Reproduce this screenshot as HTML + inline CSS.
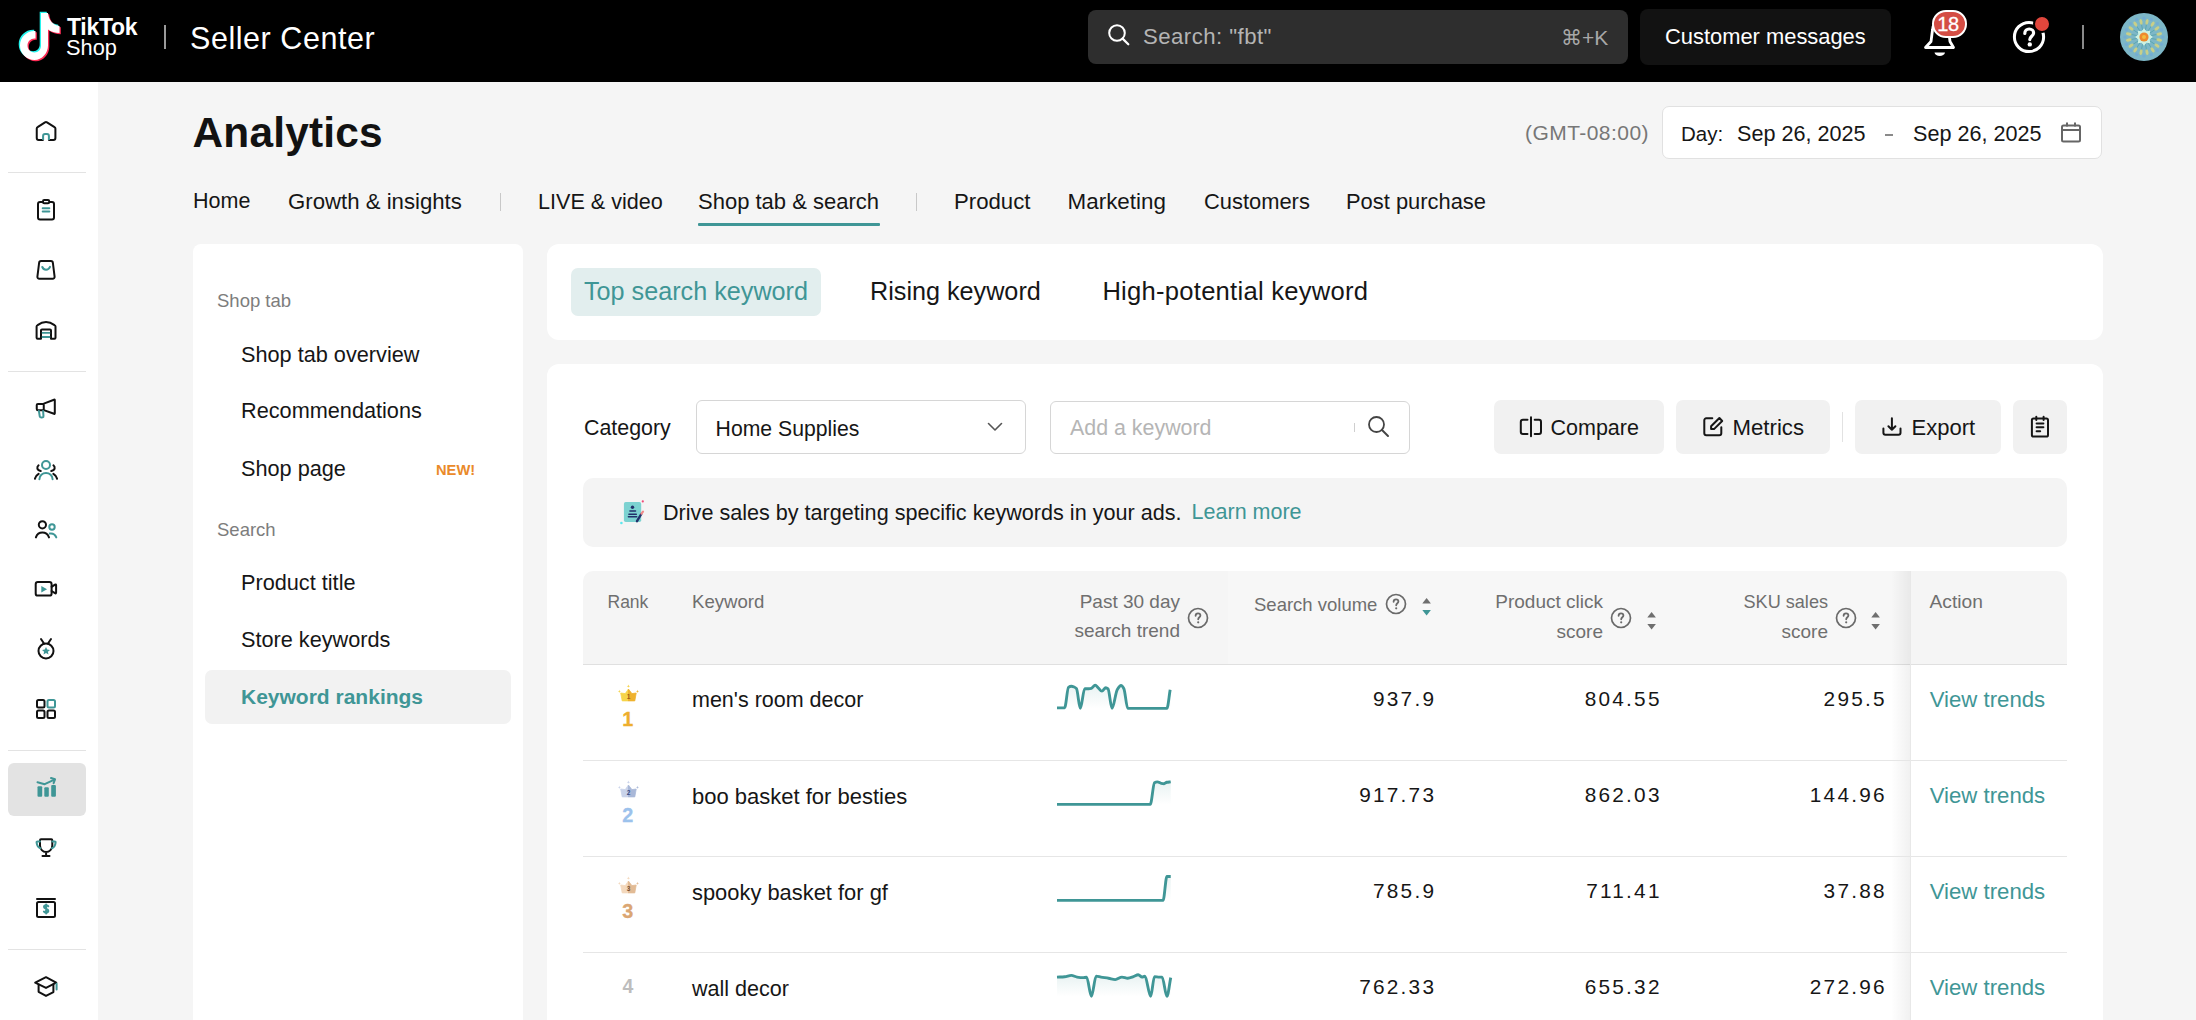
<!DOCTYPE html>
<html><head><meta charset="utf-8"><style>
html,body{margin:0;padding:0;width:2196px;height:1020px;overflow:hidden;background:#f5f5f5;}
body{position:relative;font-family:"Liberation Sans",sans-serif;}
.r{position:absolute;display:block;}
.t{position:absolute;white-space:nowrap;}
.med{-webkit-text-stroke:0.65px currentColor;}
.med2{-webkit-text-stroke:0.3px currentColor;}
</style></head><body>
<div class="r" style="left:0px;top:0px;width:2196px;height:1020px;background:#f5f5f5;border-radius:0;"></div>
<div class="r" style="left:0px;top:0px;width:2196px;height:82px;background:#000;border-radius:0;"></div>
<div class="r" style="left:0px;top:82px;width:98px;height:938px;background:#fff;border-radius:0;"></div>
<svg class="r" style="left:0px;top:0px;" width="70" height="70" viewBox="0 0 70 70"><path d="M41 13 H48 C48.5 20 53 25.5 59.5 26 V33 C55 33 51 31.5 48 29.5 V45.5 C48 53 42 60 34.5 60 C26.5 60 20 53.5 20 45.5 C20 37 27 30.5 35.5 31 V38.5 C31 38 27.5 41 27.5 45.5 C27.5 49.5 30.5 52.5 34.5 52.5 C38.5 52.5 41 49.5 41 45.5 Z" fill="#25f4ee" transform="translate(-1.3,-1.3)"/><path d="M41 13 H48 C48.5 20 53 25.5 59.5 26 V33 C55 33 51 31.5 48 29.5 V45.5 C48 53 42 60 34.5 60 C26.5 60 20 53.5 20 45.5 C20 37 27 30.5 35.5 31 V38.5 C31 38 27.5 41 27.5 45.5 C27.5 49.5 30.5 52.5 34.5 52.5 C38.5 52.5 41 49.5 41 45.5 Z" fill="#fe2c55" transform="translate(1.3,1.3)"/><path d="M41 13 H48 C48.5 20 53 25.5 59.5 26 V33 C55 33 51 31.5 48 29.5 V45.5 C48 53 42 60 34.5 60 C26.5 60 20 53.5 20 45.5 C20 37 27 30.5 35.5 31 V38.5 C31 38 27.5 41 27.5 45.5 C27.5 49.5 30.5 52.5 34.5 52.5 C38.5 52.5 41 49.5 41 45.5 Z" fill="#fff"/></svg>
<div class="t" style="left:67.00px;top:15.53px;font-size:23px;line-height:23px;color:#fff;font-weight:700;letter-spacing:-0.3px;">TikTok</div>
<div class="t" style="left:66.00px;top:37.05px;font-size:21.8px;line-height:21.8px;color:#fff;">Shop</div>
<div class="r" style="left:164px;top:25px;width:2px;height:24px;background:#9a9a9a;border-radius:0;"></div>
<div class="t" style="left:190.00px;top:23.18px;font-size:30.5px;line-height:30.5px;color:#fff;letter-spacing:0.55px;">Seller Center</div>
<div class="r" style="left:1088px;top:10px;width:540px;height:54px;background:#2e2e2e;border-radius:8px;"></div>
<svg class="r" style="left:1106px;top:22px;" width="26" height="26" viewBox="0 0 26 26"><circle cx="11" cy="11" r="7.8" fill="none" stroke="#fff" stroke-width="2"/><path d="M16.6 16.6 L22.3 22.3" stroke="#fff" stroke-width="2.2" stroke-linecap="round"/></svg>
<div class="t" class="med2" style="left:1143.00px;top:26.21px;font-size:22.2px;line-height:22.2px;color:#b4b4b4;letter-spacing:0.45px;">Search: "fbt"</div>
<div class="t" style="left:1561.00px;top:27.22px;font-size:21px;line-height:21px;color:#a8a8a8;">&#8984;+K</div>
<div class="r" style="left:1640px;top:9px;width:251px;height:56px;background:#121212;border-radius:8px;"></div>
<div class="t" class="med" style="left:1665.00px;top:26.46px;font-size:21.9px;line-height:21.9px;color:#fff;">Customer messages</div>
<svg class="r" style="left:1920px;top:14px;" width="40" height="48" viewBox="0 0 40 48"><path d="M5.5 33.5 L11 27.5 L12.5 16 C13 10 16.5 7 20.5 7 C24.5 7 28 10 28.5 16 L30 27.5 L33.5 33.5 Z" fill="none" stroke="#fff" stroke-width="2.8" stroke-linejoin="round"/><path d="M14.5 38.5 C15 43 24.5 43 25 38.5 Z" fill="#fff"/></svg>
<div class="r" style="left:1932px;top:10px;width:35px;height:28px;background:#d44d44;border-radius:14px;border:2px solid #fff;box-sizing:border-box;"></div>
<div class="t" style="left:1937.30px;top:13.67px;font-size:20px;line-height:20px;color:#fff;letter-spacing:-0.4px;-webkit-text-stroke:0.3px #fff;">18</div>
<svg class="r" style="left:2010px;top:18px;" width="40" height="40" viewBox="0 0 40 40"><circle cx="19" cy="19" r="14.6" fill="none" stroke="#fff" stroke-width="3"/><path d="M14.8 15.4 C14.8 12.6 16.8 11 19.2 11 C21.8 11 23.6 12.6 23.6 15 C23.6 18.2 19.8 18.4 19.8 21.6" fill="none" stroke="#fff" stroke-width="3.2" stroke-linecap="round"/><circle cx="19.8" cy="26.4" r="2.2" fill="#fff"/></svg>
<div class="r" style="left:2033px;top:15px;width:18px;height:18px;border-radius:50%;background:#e0463c;border:2px solid #000;box-sizing:border-box;"></div>
<div class="r" style="left:2082px;top:25px;width:2px;height:24px;background:#8a8a8a;border-radius:0;"></div>
<svg class="r" style="left:2120px;top:13px;" width="48" height="48" viewBox="0 0 48 48"><circle cx="24" cy="24" r="24" fill="#7db7c7"/><line x1="30.9" y1="25.4" x2="37.7" y2="26.7" stroke="#4e9fa6" stroke-width="1" stroke-opacity="0.7"/><line x1="29.8" y1="27.9" x2="35.6" y2="31.8" stroke="#4e9fa6" stroke-width="1" stroke-opacity="0.7"/><line x1="27.9" y1="29.8" x2="31.8" y2="35.6" stroke="#4e9fa6" stroke-width="1" stroke-opacity="0.7"/><line x1="25.4" y1="30.9" x2="26.7" y2="37.7" stroke="#4e9fa6" stroke-width="1" stroke-opacity="0.7"/><line x1="22.6" y1="30.9" x2="21.3" y2="37.7" stroke="#4e9fa6" stroke-width="1" stroke-opacity="0.7"/><line x1="20.1" y1="29.8" x2="16.2" y2="35.6" stroke="#4e9fa6" stroke-width="1" stroke-opacity="0.7"/><line x1="18.2" y1="27.9" x2="12.4" y2="31.8" stroke="#4e9fa6" stroke-width="1" stroke-opacity="0.7"/><line x1="17.1" y1="25.4" x2="10.3" y2="26.7" stroke="#4e9fa6" stroke-width="1" stroke-opacity="0.7"/><line x1="17.1" y1="22.6" x2="10.3" y2="21.3" stroke="#4e9fa6" stroke-width="1" stroke-opacity="0.7"/><line x1="18.2" y1="20.1" x2="12.4" y2="16.2" stroke="#4e9fa6" stroke-width="1" stroke-opacity="0.7"/><line x1="20.1" y1="18.2" x2="16.2" y2="12.4" stroke="#4e9fa6" stroke-width="1" stroke-opacity="0.7"/><line x1="22.6" y1="17.1" x2="21.3" y2="10.3" stroke="#4e9fa6" stroke-width="1" stroke-opacity="0.7"/><line x1="25.4" y1="17.1" x2="26.7" y2="10.3" stroke="#4e9fa6" stroke-width="1" stroke-opacity="0.7"/><line x1="27.9" y1="18.2" x2="31.8" y2="12.4" stroke="#4e9fa6" stroke-width="1" stroke-opacity="0.7"/><line x1="29.8" y1="20.1" x2="35.6" y2="16.2" stroke="#4e9fa6" stroke-width="1" stroke-opacity="0.7"/><line x1="30.9" y1="22.6" x2="37.7" y2="21.3" stroke="#4e9fa6" stroke-width="1" stroke-opacity="0.7"/><ellipse cx="39.2" cy="27.0" rx="2.9" ry="1.5" fill="#d6d47e" fill-opacity="0.85" transform="rotate(11.2 39.2 27.0)"/><circle cx="41.6" cy="31.3" r="1.6" fill="#71a8d8" fill-opacity="0.7"/><ellipse cx="36.9" cy="32.6" rx="2.9" ry="1.5" fill="#d6d47e" fill-opacity="0.85" transform="rotate(33.8 36.9 32.6)"/><circle cx="37.4" cy="37.4" r="1.6" fill="#71a8d8" fill-opacity="0.7"/><ellipse cx="32.6" cy="36.9" rx="2.9" ry="1.5" fill="#d6d47e" fill-opacity="0.85" transform="rotate(56.2 32.6 36.9)"/><circle cx="31.3" cy="41.6" r="1.6" fill="#71a8d8" fill-opacity="0.7"/><ellipse cx="27.0" cy="39.2" rx="2.9" ry="1.5" fill="#d6d47e" fill-opacity="0.85" transform="rotate(78.8 27.0 39.2)"/><circle cx="24.0" cy="43.0" r="1.6" fill="#71a8d8" fill-opacity="0.7"/><ellipse cx="21.0" cy="39.2" rx="2.9" ry="1.5" fill="#d6d47e" fill-opacity="0.85" transform="rotate(101.2 21.0 39.2)"/><circle cx="16.7" cy="41.6" r="1.6" fill="#71a8d8" fill-opacity="0.7"/><ellipse cx="15.4" cy="36.9" rx="2.9" ry="1.5" fill="#d6d47e" fill-opacity="0.85" transform="rotate(123.7 15.4 36.9)"/><circle cx="10.6" cy="37.4" r="1.6" fill="#71a8d8" fill-opacity="0.7"/><ellipse cx="11.1" cy="32.6" rx="2.9" ry="1.5" fill="#d6d47e" fill-opacity="0.85" transform="rotate(146.3 11.1 32.6)"/><circle cx="6.4" cy="31.3" r="1.6" fill="#71a8d8" fill-opacity="0.7"/><ellipse cx="8.8" cy="27.0" rx="2.9" ry="1.5" fill="#d6d47e" fill-opacity="0.85" transform="rotate(168.7 8.8 27.0)"/><circle cx="5.0" cy="24.0" r="1.6" fill="#71a8d8" fill-opacity="0.7"/><ellipse cx="8.8" cy="21.0" rx="2.9" ry="1.5" fill="#d6d47e" fill-opacity="0.85" transform="rotate(191.3 8.8 21.0)"/><circle cx="6.4" cy="16.7" r="1.6" fill="#71a8d8" fill-opacity="0.7"/><ellipse cx="11.1" cy="15.4" rx="2.9" ry="1.5" fill="#d6d47e" fill-opacity="0.85" transform="rotate(213.7 11.1 15.4)"/><circle cx="10.6" cy="10.6" r="1.6" fill="#71a8d8" fill-opacity="0.7"/><ellipse cx="15.4" cy="11.1" rx="2.9" ry="1.5" fill="#d6d47e" fill-opacity="0.85" transform="rotate(236.3 15.4 11.1)"/><circle cx="16.7" cy="6.4" r="1.6" fill="#71a8d8" fill-opacity="0.7"/><ellipse cx="21.0" cy="8.8" rx="2.9" ry="1.5" fill="#d6d47e" fill-opacity="0.85" transform="rotate(258.8 21.0 8.8)"/><circle cx="24.0" cy="5.0" r="1.6" fill="#71a8d8" fill-opacity="0.7"/><ellipse cx="27.0" cy="8.8" rx="2.9" ry="1.5" fill="#d6d47e" fill-opacity="0.85" transform="rotate(281.2 27.0 8.8)"/><circle cx="31.3" cy="6.4" r="1.6" fill="#71a8d8" fill-opacity="0.7"/><ellipse cx="32.6" cy="11.1" rx="2.9" ry="1.5" fill="#d6d47e" fill-opacity="0.85" transform="rotate(303.8 32.6 11.1)"/><circle cx="37.4" cy="10.6" r="1.6" fill="#71a8d8" fill-opacity="0.7"/><ellipse cx="36.9" cy="15.4" rx="2.9" ry="1.5" fill="#d6d47e" fill-opacity="0.85" transform="rotate(326.2 36.9 15.4)"/><circle cx="41.6" cy="16.7" r="1.6" fill="#71a8d8" fill-opacity="0.7"/><ellipse cx="39.2" cy="21.0" rx="2.9" ry="1.5" fill="#d6d47e" fill-opacity="0.85" transform="rotate(348.8 39.2 21.0)"/><circle cx="43.0" cy="24.0" r="1.6" fill="#71a8d8" fill-opacity="0.7"/><polygon points="32.8,24.0 29.7,26.4 30.2,30.2 26.4,29.7 24.0,32.8 21.6,29.7 17.8,30.2 18.3,26.4 15.2,24.0 18.3,21.6 17.8,17.8 21.6,18.3 24.0,15.2 26.4,18.3 30.2,17.8 29.7,21.6 " fill="#cdf2e2"/><circle cx="24" cy="24" r="4.6" fill="#ee8a2e"/><circle cx="24" cy="24" r="2" fill="#f3bd3a"/></svg>
<div class="r" style="left:8px;top:172px;width:78px;height:1px;background:#e3e3e3;border-radius:0;"></div>
<div class="r" style="left:8px;top:371px;width:78px;height:1px;background:#e3e3e3;border-radius:0;"></div>
<div class="r" style="left:8px;top:750px;width:78px;height:1px;background:#e3e3e3;border-radius:0;"></div>
<div class="r" style="left:8px;top:949px;width:78px;height:1px;background:#e3e3e3;border-radius:0;"></div>
<div class="r" style="left:8px;top:763px;width:78px;height:53px;background:#e3e3e3;border-radius:6px;"></div>
<svg class="r" style="left:34px;top:118px;" width="24" height="24" viewBox="0 0 24 24"><path d="M8.9 22.1 H4.7 C3.6 22.1 2.75 21.2 2.75 20.1 V10.5 C2.75 9.9 3.1 9.4 3.6 9.1 L11 4.3 C11.6 3.9 12.4 3.9 13 4.3 L20.5 9.1 C21 9.4 21.4 9.9 21.4 10.5 V20.1 C21.4 21.2 20.5 22.1 19.4 22.1 H15" fill="none" stroke="#111" stroke-width="2" stroke-linecap="round" stroke-linejoin="round"/><path d="M9.1 22.1 V18.1 C9.1 16.9 9.8 16.1 11 16.1 H13 C14.2 16.1 14.9 16.9 14.9 18.1 V22.1" fill="none" stroke="#3f9696" stroke-width="2"/></svg>
<svg class="r" style="left:34px;top:197px;" width="24" height="24" viewBox="0 0 24 24"><rect x="4" y="5.1" width="16" height="17.5" rx="2" fill="none" stroke="#111" stroke-width="2" stroke-linecap="round" stroke-linejoin="round"/><rect x="9" y="3.1" width="6.2" height="3.2" rx="1.2" fill="#fff" stroke="#111" stroke-width="2"/><path d="M8.7 11.3 H15.3 M8.7 14.6 H15.3" fill="none" stroke="#3f9696" stroke-width="2" stroke-linecap="round" stroke-linejoin="round"/></svg>
<svg class="r" style="left:34px;top:257px;" width="24" height="24" viewBox="0 0 24 24"><path d="M7.1 4.1 H16.9 C18 4.1 18.8 4.9 18.9 6 L20.6 19.7 C20.7 20.9 19.9 21.8 18.7 21.8 H5.3 C4.1 21.8 3.3 20.9 3.4 19.7 L5.1 6 C5.2 4.9 6 4.1 7.1 4.1 Z" fill="none" stroke="#111" stroke-width="2" stroke-linecap="round" stroke-linejoin="round"/><path d="M8.3 10 C9.8 13.6 14.3 13.6 16 9.8" fill="none" stroke="#3f9696" stroke-width="2" stroke-linecap="round" stroke-linejoin="round"/></svg>
<svg class="r" style="left:34px;top:318px;" width="24" height="24" viewBox="0 0 24 24"><path d="M7 20.8 H3.6 C3 20.8 2.6 20.4 2.6 19.8 V8.6 C2.6 7.8 3 7.3 3.6 7.1 Q12 0.9 20.5 7.1 C21.1 7.3 21.5 7.8 21.5 8.6 V19.8 C21.5 20.4 21.1 20.8 20.5 20.8 H17 V12.5 C17 11.9 16.6 11.4 16 11.4 H8 C7.4 11.4 7 11.9 7 12.5 Z" fill="none" stroke="#111" stroke-width="2" stroke-linecap="round" stroke-linejoin="round"/><path d="M7.8 14.8 H16.2 M7.8 19 H16.2" fill="none" stroke="#3f9696" stroke-width="1.8"/></svg>
<svg class="r" style="left:34px;top:395px;" width="24" height="24" viewBox="0 0 24 24"><rect x="2.75" y="8.9" width="7" height="6.4" rx="1.2" fill="none" stroke="#111" stroke-width="2" stroke-linecap="round" stroke-linejoin="round"/><path d="M9.8 8.6 L20 4.7 C20.5 4.5 20.8 4.7 20.8 5.2 V18.3 C20.8 18.8 20.5 19 20 18.8 L9.8 15.1" fill="none" stroke="#111" stroke-width="2" stroke-linecap="round" stroke-linejoin="round"/><path d="M4.9 15.9 L5.8 21.6 C6.1 22.9 9.7 22.7 9.5 21.4 L9.1 15.9" fill="none" stroke="#3f9696" stroke-width="2" stroke-linecap="round" stroke-linejoin="round"/></svg>
<svg class="r" style="left:34px;top:458px;" width="24" height="24" viewBox="0 0 24 24"><circle cx="12" cy="7" r="4" fill="none" stroke="#3f9696" stroke-width="2" stroke-linecap="round" stroke-linejoin="round"/><path d="M5.4 21.2 C5.4 17.5 8.4 15 12 15 C15.6 15 18.6 17.5 18.6 21.2" fill="none" stroke="#3f9696" stroke-width="2" stroke-linecap="round" stroke-linejoin="round"/><path d="M4.6 7.3 C2.6 9 2.6 12.2 6.8 13 M19.4 7.3 C21.4 9 21.4 12.2 17.2 13" fill="none" stroke="#111" stroke-width="2" stroke-linecap="round" stroke-linejoin="round"/><path d="M4.6 15.8 C2.6 17 1.2 18.8 0.9 20.8 M19.4 15.8 C21.4 17 22.8 18.8 23.1 20.8" fill="none" stroke="#111" stroke-width="2" stroke-linecap="round" stroke-linejoin="round"/></svg>
<svg class="r" style="left:34px;top:517px;" width="24" height="24" viewBox="0 0 24 24"><circle cx="8.4" cy="7.8" r="3.6" fill="none" stroke="#111" stroke-width="2" stroke-linecap="round" stroke-linejoin="round"/><path d="M1.9 20.4 C3 17.3 5.5 15.6 8.4 15.6 C11.3 15.6 13.8 17.3 15 20.4" fill="none" stroke="#111" stroke-width="2" stroke-linecap="round" stroke-linejoin="round"/><circle cx="18" cy="10" r="2.7" fill="none" stroke="#3f9696" stroke-width="2" stroke-linecap="round" stroke-linejoin="round"/><path d="M15.8 16.5 C18.5 16.1 21.2 17.5 22.3 20.4" fill="none" stroke="#3f9696" stroke-width="2" stroke-linecap="round" stroke-linejoin="round"/></svg>
<svg class="r" style="left:34px;top:577px;" width="24" height="24" viewBox="0 0 24 24"><rect x="1.7" y="5.1" width="15.9" height="13.5" rx="2.2" fill="none" stroke="#111" stroke-width="2" stroke-linecap="round" stroke-linejoin="round"/><path d="M17.6 9.8 L21 7.6 C21.6 7.2 22.1 7.5 22.1 8.2 V15.6 C22.1 16.3 21.6 16.6 21 16.2 L17.6 14" fill="none" stroke="#111" stroke-width="2" stroke-linecap="round" stroke-linejoin="round"/><path d="M7.3 8.9 V15.5 L13.1 12.2 Z" fill="#3f9696"/></svg>
<svg class="r" style="left:34px;top:637px;" width="24" height="24" viewBox="0 0 24 24"><circle cx="12" cy="14" r="7.5" fill="none" stroke="#111" stroke-width="2" stroke-linecap="round" stroke-linejoin="round"/><path d="M7 2 L10 6.5 M17 2 L14 6.5" fill="none" stroke="#111" stroke-width="2" stroke-linecap="round" stroke-linejoin="round"/><path d="M12 10 L13.2 12.6 L16 12.9 L13.9 14.7 L14.5 17.5 L12 16 L9.5 17.5 L10.1 14.7 L8 12.9 L10.8 12.6 Z" fill="#3f9696"/></svg>
<svg class="r" style="left:34px;top:697px;" width="24" height="24" viewBox="0 0 24 24"><rect x="3" y="3" width="7.5" height="7.5" rx="1.5" fill="none" stroke="#111" stroke-width="2" stroke-linecap="round" stroke-linejoin="round"/><rect x="13.5" y="3" width="7.5" height="7.5" rx="1.5" fill="none" stroke="#3f9696" stroke-width="2" stroke-linecap="round" stroke-linejoin="round"/><rect x="3" y="13.5" width="7.5" height="7.5" rx="1.5" fill="none" stroke="#111" stroke-width="2" stroke-linecap="round" stroke-linejoin="round"/><rect x="13.5" y="13.5" width="7.5" height="7.5" rx="1.5" fill="none" stroke="#111" stroke-width="2" stroke-linecap="round" stroke-linejoin="round"/></svg>
<svg class="r" style="left:34px;top:776px;" width="24" height="24" viewBox="0 0 24 24"><rect x="3.5" y="10.2" width="4.7" height="10.6" rx="1" fill="#3f9696"/><rect x="10.3" y="11.3" width="4.5" height="9.5" rx="1" fill="#3f9696"/><rect x="17.2" y="9.1" width="4.7" height="11.7" rx="1" fill="#3f9696"/><path d="M3.5 6.3 L10.7 8.2 L20.4 3.6" fill="none" stroke="#3f9696" stroke-width="2" stroke-linecap="round" stroke-linejoin="round"/><path d="M17 2 L21 3.3 L19.6 7.2" fill="none" stroke="#3f9696" stroke-width="2" stroke-linecap="round" stroke-linejoin="round"/></svg>
<svg class="r" style="left:34px;top:835px;" width="24" height="24" viewBox="0 0 24 24"><path d="M6 5.2 C6 4.6 6.4 4.2 7 4.2 H17.3 C17.9 4.2 18.3 4.6 18.3 5.2 V10.5 C18.3 14.2 15.5 17 12.1 17 C8.7 17 6 14.2 6 10.5 Z M12.1 17 V21.1 M8.5 21.1 H15.5" fill="none" stroke="#111" stroke-width="2" stroke-linecap="round" stroke-linejoin="round"/><path d="M6 6.4 H3.6 C2.9 6.4 2.5 6.9 2.6 7.6 C3 10.5 4.1 12.5 6.4 13.2 M18.3 6.4 H20.6 C21.3 6.4 21.7 6.9 21.6 7.6 C21.2 10.5 20.1 12.5 17.9 13.2" fill="none" stroke="#3f9696" stroke-width="2" stroke-linecap="round" stroke-linejoin="round"/></svg>
<svg class="r" style="left:34px;top:896px;" width="24" height="24" viewBox="0 0 24 24"><path d="M3 2.9 H21" fill="none" stroke="#111" stroke-width="2" stroke-linecap="round" stroke-linejoin="round"/><rect x="3" y="6" width="18" height="15" rx="1.5" fill="none" stroke="#111" stroke-width="2" stroke-linecap="round" stroke-linejoin="round"/><path d="M14.3 10.3 C13.9 9.6 13.1 9.3 12.2 9.3 C10.9 9.3 10 10 10 11 C10 13.2 14.3 12.4 14.3 14.8 C14.3 15.8 13.4 16.6 12.1 16.6 C11.2 16.6 10.3 16.2 9.9 15.5 M12.1 8.4 V17.6" fill="none" stroke="#3f9696" stroke-width="2" stroke-linecap="round" stroke-linejoin="round"/></svg>
<svg class="r" style="left:34px;top:974px;" width="24" height="24" viewBox="0 0 24 24"><path d="M1.2 8.6 L12 3.2 L22.2 8.6 L12 13.9 Z" fill="none" stroke="#111" stroke-width="2" stroke-linecap="round" stroke-linejoin="round"/><path d="M4.6 10.6 V17.8 L12 21.9 L19.4 18.1 V10.4" fill="none" stroke="#111" stroke-width="2" stroke-linecap="round" stroke-linejoin="round"/><path d="M22.6 9.8 V15.4" fill="none" stroke="#3f9696" stroke-width="2" stroke-linecap="round" stroke-linejoin="round"/></svg>
<div class="t" style="left:192.50px;top:112.11px;font-size:42.4px;line-height:42.4px;color:#121212;font-weight:700;letter-spacing:0.2px;">Analytics</div>
<div class="t" style="left:1525.00px;top:122.02px;font-size:21px;line-height:21px;color:#777;letter-spacing:0.45px;">(GMT-08:00)</div>
<div class="r" style="left:1662px;top:106px;width:440px;height:53px;background:#fff;border-radius:7px;border:1px solid #e1e1e1;box-sizing:border-box;"></div>
<div class="t" style="left:1681.00px;top:123.65px;font-size:20.5px;line-height:20.5px;color:#161616;">Day:</div>
<div class="t" style="left:1737.00px;top:122.72px;font-size:21.6px;line-height:21.6px;color:#161616;">Sep 26, 2025</div>
<div class="r" style="left:1885px;top:134px;width:8px;height:2px;background:#8a8a8a;border-radius:0;"></div>
<div class="t" style="left:1913.00px;top:122.72px;font-size:21.6px;line-height:21.6px;color:#161616;">Sep 26, 2025</div>
<svg class="r" style="left:2059px;top:120px;" width="24" height="24" viewBox="0 0 24 24"><rect x="3" y="5.5" width="18" height="16" rx="1.5" fill="none" stroke="#666" stroke-width="2"/><path d="M3 10 H21 M8 2.5 V6.5 M16 2.5 V6.5" fill="none" stroke="#666" stroke-width="2"/></svg>
<div class="t" class="med" style="left:193.00px;top:191.30px;font-size:21.5px;line-height:21.5px;color:#161616;">Home</div>
<div class="t" class="med" style="left:288.00px;top:190.71px;font-size:22.2px;line-height:22.2px;color:#161616;">Growth &amp; insights</div>
<div class="t" class="med" style="left:538.00px;top:191.22px;font-size:21.6px;line-height:21.6px;color:#161616;">LIVE &amp; video</div>
<div class="t" class="med" style="left:698.00px;top:190.88px;font-size:22.0px;line-height:22.0px;color:#161616;">Shop tab &amp; search</div>
<div class="t" class="med" style="left:954.00px;top:190.71px;font-size:22.2px;line-height:22.2px;color:#161616;">Product</div>
<div class="t" class="med" style="left:1067.60px;top:190.54px;font-size:22.4px;line-height:22.4px;color:#161616;">Marketing</div>
<div class="t" class="med" style="left:1204.00px;top:190.96px;font-size:21.9px;line-height:21.9px;color:#161616;">Customers</div>
<div class="t" class="med" style="left:1346.00px;top:190.96px;font-size:21.9px;line-height:21.9px;color:#161616;">Post purchase</div>
<div class="r" style="left:500px;top:193px;width:1px;height:18px;background:#c8c8c8;border-radius:0;"></div>
<div class="r" style="left:916px;top:193px;width:1px;height:18px;background:#c8c8c8;border-radius:0;"></div>
<div class="r" style="left:698px;top:223px;width:182px;height:3px;background:#3f9696;border-radius:1px;"></div>
<div class="r" style="left:193px;top:244px;width:330px;height:796px;background:#fff;border-radius:8px;"></div>
<div class="t" style="left:217.00px;top:292.34px;font-size:18.5px;line-height:18.5px;color:#7d7d7d;">Shop tab</div>
<div class="t" style="left:241.00px;top:343.63px;font-size:21.7px;line-height:21.7px;color:#161616;">Shop tab overview</div>
<div class="t" style="left:241.00px;top:400.43px;font-size:21.7px;line-height:21.7px;color:#161616;">Recommendations</div>
<div class="t" style="left:241.00px;top:458.03px;font-size:21.7px;line-height:21.7px;color:#161616;">Shop page</div>
<div class="t" style="left:436.00px;top:462.56px;font-size:14.7px;line-height:14.7px;color:#ea8a2a;font-weight:700;">NEW!</div>
<div class="t" style="left:217.00px;top:520.64px;font-size:18.5px;line-height:18.5px;color:#7d7d7d;">Search</div>
<div class="t" style="left:241.00px;top:571.83px;font-size:21.7px;line-height:21.7px;color:#161616;">Product title</div>
<div class="t" style="left:241.00px;top:628.63px;font-size:21.7px;line-height:21.7px;color:#161616;">Store keywords</div>
<div class="r" style="left:205px;top:670px;width:306px;height:54px;background:#f2f2f2;border-radius:7px;"></div>
<div class="t" style="left:241.00px;top:686.22px;font-size:21px;line-height:21px;color:#3f9696;font-weight:700;">Keyword rankings</div>
<div class="r" style="left:547px;top:244px;width:1556px;height:96px;background:#fff;border-radius:12px;"></div>
<div class="r" style="left:571px;top:268px;width:250px;height:48px;background:#e2eeee;border-radius:7px;"></div>
<div class="t" class="med" style="left:584.00px;top:279.27px;font-size:25.2px;line-height:25.2px;color:#3f9696;">Top search keyword</div>
<div class="t" class="med" style="left:870.00px;top:279.27px;font-size:25.2px;line-height:25.2px;color:#161616;">Rising keyword</div>
<div class="t" class="med" style="left:1102.40px;top:278.93px;font-size:25.6px;line-height:25.6px;color:#161616;letter-spacing:0.25px;">High-potential keyword</div>
<div class="r" style="left:547px;top:364px;width:1556px;height:676px;background:#fff;border-radius:12px;"></div>
<div class="t" style="left:584.00px;top:417.68px;font-size:21.4px;line-height:21.4px;color:#161616;">Category</div>
<div class="r" style="left:696px;top:400px;width:330px;height:54px;background:#fff;border-radius:6px;border:1px solid #d6d6d6;box-sizing:border-box;"></div>
<div class="t" style="left:715.60px;top:417.55px;font-size:21.2px;line-height:21.2px;color:#161616;">Home Supplies</div>
<svg class="r" style="left:986px;top:419px;" width="18" height="16" viewBox="0 0 18 16"><path d="M2.5 4.5 L9 11 L15.5 4.5" fill="none" stroke="#555" stroke-width="1.6" stroke-linecap="round" stroke-linejoin="round"/></svg>
<div class="r" style="left:1050px;top:401px;width:360px;height:53px;background:#fff;border-radius:6px;border:1px solid #d6d6d6;box-sizing:border-box;"></div>
<div class="t" style="left:1070.00px;top:418.38px;font-size:21.4px;line-height:21.4px;color:#b5b5b5;">Add a keyword</div>
<div class="r" style="left:1354px;top:423px;width:1px;height:9px;background:#cfcfcf;border-radius:0;"></div>
<svg class="r" style="left:1366px;top:414px;" width="26" height="26" viewBox="0 0 26 26"><circle cx="10.5" cy="10.5" r="7.5" fill="none" stroke="#444" stroke-width="1.8"/><path d="M16 16 L22 22" stroke="#444" stroke-width="2" stroke-linecap="round"/></svg>
<div class="r" style="left:1494px;top:400px;width:170px;height:54px;background:#f1f1f1;border-radius:7px;"></div>
<svg class="r" style="left:1518px;top:415px;" width="26" height="24" viewBox="0 0 26 24"><path d="M9.5 4.8 H5 C3.7 4.8 2.8 5.7 2.8 7 V16.8 C2.8 18.1 3.7 19 5 19 H9.5 M16.7 4.8 H21 C22.2 4.8 23 5.7 23 7 V16.8 C23 18.1 22.2 19 21 19 H16.7" fill="none" stroke="#161616" stroke-width="2" stroke-linecap="round" stroke-linejoin="round"/><path d="M13 2.3 V21.3" fill="none" stroke="#161616" stroke-width="2" stroke-linecap="round" stroke-linejoin="round"/></svg>
<div class="t" class="med" style="left:1550.50px;top:417.80px;font-size:21.5px;line-height:21.5px;color:#161616;">Compare</div>
<div class="r" style="left:1676px;top:400px;width:154px;height:54px;background:#f1f1f1;border-radius:7px;"></div>
<svg class="r" style="left:1701px;top:414px;" width="24" height="24" viewBox="0 0 24 24"><path d="M11.3 4.3 H5.3 C4.1 4.3 3.3 5.1 3.3 6.3 V19.3 C3.3 20.5 4.1 21.3 5.3 21.3 H18.3 C19.5 21.3 20.3 20.5 20.3 19.3 V13.3" fill="none" stroke="#161616" stroke-width="2" stroke-linecap="round" stroke-linejoin="round"/><path d="M10.1 15.1 V12.3 L18.4 4 L21.2 7 L13 15.1 Z" fill="none" stroke="#161616" stroke-width="2" stroke-linecap="round" stroke-linejoin="round"/></svg>
<div class="t" class="med" style="left:1732.50px;top:417.21px;font-size:22.2px;line-height:22.2px;color:#161616;">Metrics</div>
<div class="r" style="left:1842px;top:412px;width:1px;height:30px;background:#e2e2e2;border-radius:0;"></div>
<div class="r" style="left:1855px;top:400px;width:146px;height:54px;background:#f1f1f1;border-radius:7px;"></div>
<svg class="r" style="left:1880px;top:415px;" width="24" height="24" viewBox="0 0 24 24"><path d="M11.9 3.3 V14.8 M8.4 11.3 L11.9 14.8 L15.4 11.3" fill="none" stroke="#161616" stroke-width="2" stroke-linecap="round" stroke-linejoin="round"/><path d="M3.4 13.4 V17.8 C3.4 19 4.2 19.8 5.4 19.8 H18.5 C19.7 19.8 20.5 19 20.5 17.8 V13.4" fill="none" stroke="#161616" stroke-width="2" stroke-linecap="round" stroke-linejoin="round"/></svg>
<div class="t" class="med" style="left:1911.60px;top:417.38px;font-size:22px;line-height:22px;color:#161616;">Export</div>
<div class="r" style="left:2013px;top:400px;width:54px;height:54px;background:#f1f1f1;border-radius:7px;"></div>
<svg class="r" style="left:2028px;top:414px;" width="24" height="26" viewBox="0 0 24 26"><rect x="3.9" y="4.4" width="16.1" height="18.2" rx="1.6" fill="none" stroke="#161616" stroke-width="2" stroke-linecap="round" stroke-linejoin="round"/><path d="M8.3 2.8 V6 M15.6 2.8 V6 M8.6 9.5 H15.4 M8.6 13.3 H15.4 M8.6 17.3 H12.2" fill="none" stroke="#161616" stroke-width="2" stroke-linecap="round" stroke-linejoin="round"/></svg>
<div class="r" style="left:583px;top:478px;width:1484px;height:69px;background:#f4f4f4;border-radius:10px;"></div>
<svg class="r" style="left:617px;top:498px;" width="30" height="30" viewBox="0 0 30 30"><rect x="6.9" y="4.1" width="17.3" height="20" rx="1.8" fill="#7cd2d1"/><circle cx="15.5" cy="9.3" r="1.7" fill="#22306a"/><path d="M12.9 13.1 H18.5 M11.9 16.3 H19.3 M11.4 18.7 H19.7" stroke="#22306a" stroke-width="1.5" stroke-linecap="round"/><path d="M20 23.2 L24.3 16" stroke="#22306a" stroke-width="2.4" stroke-linecap="round"/><path d="M24.5 15.6 L26 13.6" stroke="#f08a8a" stroke-width="2.2" stroke-linecap="round"/><circle cx="25.8" cy="3.4" r="1.1" fill="#ef4a78"/><circle cx="4.4" cy="25" r="1.3" fill="#5ae8ee"/></svg>
<div class="t" style="left:663.00px;top:501.72px;font-size:21.6px;line-height:21.6px;color:#161616;">Drive sales by targeting specific keywords in your ads.</div>
<div class="t" style="left:1191.60px;top:501.80px;font-size:21.5px;line-height:21.5px;color:#3f9696;">Learn more</div>
<div class="r" style="left:583px;top:571px;width:1484px;height:93px;background:#f5f5f5;border-radius:10px 10px 0 0;"></div>
<div class="r" style="left:1228px;top:571px;width:683px;height:93px;background:#f7f7f7;border-radius:0;"></div>
<div class="r" style="left:583px;top:664px;width:1484px;height:1px;background:#e0e0e0;border-radius:0;"></div>
<div class="t" class="med" style="left:607.50px;top:594.19px;font-size:17.5px;line-height:17.5px;color:#6f6f6f;">Rank</div>
<div class="t" class="med" style="left:692.00px;top:593.26px;font-size:18.6px;line-height:18.6px;color:#6f6f6f;">Keyword</div>
<div class="t" class="med" style="right:1016.00px;top:591.62px;font-size:19px;line-height:19px;color:#6f6f6f;">Past 30 day</div>
<div class="t" class="med" style="right:1016.00px;top:621.22px;font-size:19px;line-height:19px;color:#6f6f6f;">search trend</div>
<svg class="r" style="left:1186px;top:606px;" width="24" height="24" viewBox="0 0 24 24"><circle cx="12" cy="12" r="9.5" fill="none" stroke="#6a6a6a" stroke-width="1.7"/><path d="M9.6 9.8 C9.6 8.2 10.6 7.3 12 7.3 C13.4 7.3 14.4 8.2 14.4 9.5 C14.4 11.2 12.2 11.3 12.2 13.3" fill="none" stroke="#6a6a6a" stroke-width="1.8" stroke-linecap="round"/><circle cx="12.2" cy="16.3" r="1.1" fill="#6a6a6a"/></svg>
<div class="t" class="med" style="left:1254.00px;top:596.04px;font-size:18.5px;line-height:18.5px;color:#6f6f6f;">Search volume</div>
<svg class="r" style="left:1384px;top:592px;" width="24" height="24" viewBox="0 0 24 24"><circle cx="12" cy="12" r="9.5" fill="none" stroke="#6a6a6a" stroke-width="1.7"/><path d="M9.6 9.8 C9.6 8.2 10.6 7.3 12 7.3 C13.4 7.3 14.4 8.2 14.4 9.5 C14.4 11.2 12.2 11.3 12.2 13.3" fill="none" stroke="#6a6a6a" stroke-width="1.8" stroke-linecap="round"/><circle cx="12.2" cy="16.3" r="1.1" fill="#6a6a6a"/></svg>
<svg class="r" style="left:1421.5px;top:598.3px;" width="10" height="18" viewBox="0 0 10 18"><path d="M0.3 5.6 L4.6 0 L8.9 5.6 Z" fill="#6f6f6f"/><path d="M0.3 11.9 L4.6 17.6 L8.9 11.9 Z" fill="#3f9696"/></svg>
<div class="t" class="med" style="right:593.00px;top:591.92px;font-size:19px;line-height:19px;color:#6f6f6f;">Product click</div>
<div class="t" class="med" style="right:593.00px;top:621.92px;font-size:19px;line-height:19px;color:#6f6f6f;">score</div>
<svg class="r" style="left:1609px;top:605.5px;" width="24" height="24" viewBox="0 0 24 24"><circle cx="12" cy="12" r="9.5" fill="none" stroke="#6a6a6a" stroke-width="1.7"/><path d="M9.6 9.8 C9.6 8.2 10.6 7.3 12 7.3 C13.4 7.3 14.4 8.2 14.4 9.5 C14.4 11.2 12.2 11.3 12.2 13.3" fill="none" stroke="#6a6a6a" stroke-width="1.8" stroke-linecap="round"/><circle cx="12.2" cy="16.3" r="1.1" fill="#6a6a6a"/></svg>
<svg class="r" style="left:1646.5px;top:612.2px;" width="10" height="18" viewBox="0 0 10 18"><path d="M0.3 5.6 L4.6 0 L8.9 5.6 Z" fill="#6f6f6f"/><path d="M0.3 11.9 L4.6 17.6 L8.9 11.9 Z" fill="#6f6f6f"/></svg>
<div class="t" class="med" style="right:368.00px;top:592.68px;font-size:18.1px;line-height:18.1px;color:#6f6f6f;">SKU sales</div>
<div class="t" class="med" style="right:368.00px;top:621.92px;font-size:19px;line-height:19px;color:#6f6f6f;">score</div>
<svg class="r" style="left:1834px;top:605.5px;" width="24" height="24" viewBox="0 0 24 24"><circle cx="12" cy="12" r="9.5" fill="none" stroke="#6a6a6a" stroke-width="1.7"/><path d="M9.6 9.8 C9.6 8.2 10.6 7.3 12 7.3 C13.4 7.3 14.4 8.2 14.4 9.5 C14.4 11.2 12.2 11.3 12.2 13.3" fill="none" stroke="#6a6a6a" stroke-width="1.8" stroke-linecap="round"/><circle cx="12.2" cy="16.3" r="1.1" fill="#6a6a6a"/></svg>
<svg class="r" style="left:1871px;top:612.2px;" width="10" height="18" viewBox="0 0 10 18"><path d="M0.3 5.6 L4.6 0 L8.9 5.6 Z" fill="#6f6f6f"/><path d="M0.3 11.9 L4.6 17.6 L8.9 11.9 Z" fill="#6f6f6f"/></svg>
<div class="t" class="med" style="left:1929.50px;top:591.75px;font-size:19.2px;line-height:19.2px;color:#6f6f6f;">Action</div>
<div class="r" style="left:1891px;top:571px;width:20px;height:470px;background:linear-gradient(to right, rgba(0,0,0,0), rgba(0,0,0,0.06));"></div>
<div class="r" style="left:1910px;top:571px;width:1px;height:469px;background:#e8e8e8;border-radius:0;"></div>
<div class="r" style="left:583px;top:760px;width:1327px;height:1px;background:#e6e6e6;border-radius:0;"></div>
<div class="r" style="left:1911px;top:760px;width:156px;height:1px;background:#e6e6e6;border-radius:0;"></div>
<svg class="r" style="left:617px;top:684px;" width="23" height="19" viewBox="0 0 23 19"><defs><linearGradient id="cg1" x1="0" y1="0" x2="1" y2="0"><stop offset="0" stop-color="#f6d44a"/><stop offset="0.5" stop-color="#f6d44a"/><stop offset="0.5" stop-color="#efb22e"/><stop offset="1" stop-color="#efb22e"/></linearGradient></defs><path d="M3.7 9 L8.3 9.6 L11.4 5 L14.9 9.6 L19.2 9 L17.8 16.9 H5.2 Z" fill="url(#cg1)" stroke="url(#cg1)" stroke-width="0.8" stroke-linejoin="round"/><path d="M2.4 5.75 Q2.4 7.35 4.0 7.35 Q2.4 7.35 2.4 8.95 Q2.4 7.35 0.7999999999999998 7.35 Q2.4 7.35 2.4 5.75 Z" fill="#f6d44a"/><path d="M11.4 0.44999999999999996 Q11.4 2.15 13.1 2.15 Q11.4 2.15 11.4 3.8499999999999996 Q11.4 2.15 9.700000000000001 2.15 Q11.4 2.15 11.4 0.44999999999999996 Z" fill="#f6d44a"/><path d="M20.5 5.75 Q20.5 7.35 22.1 7.35 Q20.5 7.35 20.5 8.95 Q20.5 7.35 18.9 7.35 Q20.5 7.35 20.5 5.75 Z" fill="#efb22e"/><text x="11.6" y="14.6" font-size="6.5" font-weight="700" text-anchor="middle" fill="#a0601a" font-family="Liberation Sans">1</text></svg>
<div class="t" style="left:622.30px;top:709.74px;font-size:19.8px;line-height:19.8px;color:#eeae2e;font-weight:700;-webkit-text-stroke:0.3px currentColor;">1</div>
<div class="t" style="left:692.00px;top:690.10px;font-size:21.5px;line-height:21.5px;color:#161616;">men's room decor</div>
<svg class="r" style="left:1057.2px;top:681.5px;overflow:visible;" width="114.7" height="28.7" viewBox="90 60 600 150"><defs><linearGradient id="sg0" x1="0" y1="0" x2="0" y2="1"><stop offset="0" stop-color="#3f9696" stop-opacity="0.12"/><stop offset="1" stop-color="#3f9696" stop-opacity="0"/></linearGradient></defs><path d="M90.0,195.0 C103.3,195.0 116.7,195.0 130.0,195.0 C136.7,195.0 143.3,93.0 150.0,88.0 C155.0,84.3 160.0,82.0 165.0,82.0 C170.0,82.0 175.0,84.0 180.0,86.0 C184.0,87.6 188.0,89.8 192.0,95.0 C198.7,103.7 205.3,198.0 212.0,198.0 C219.7,198.0 227.3,95.0 235.0,95.0 C241.7,95.0 248.3,95.0 255.0,95.0 C260.0,95.0 265.0,94.2 270.0,93.0 C276.7,91.5 283.3,76.0 290.0,76.0 C295.0,76.0 300.0,85.4 305.0,90.0 C311.7,96.1 318.3,108.0 325.0,108.0 C331.7,108.0 338.3,90.0 345.0,90.0 C349.0,90.0 353.0,92.4 357.0,96.0 C364.0,102.3 371.0,198.0 378.0,198.0 C387.0,198.0 396.0,115.2 405.0,100.0 C411.7,88.7 418.3,78.0 425.0,78.0 C430.0,78.0 435.0,85.7 440.0,95.0 C446.7,107.4 453.3,198.0 460.0,198.0 C528.3,198.0 596.7,198.0 665.0,198.0 C670.7,198.0 676.3,132.7 682.0,100.0 L685,198 L90,198 Z" fill="url(#sg0)"/><path d="M90.0,195.0 C103.3,195.0 116.7,195.0 130.0,195.0 C136.7,195.0 143.3,93.0 150.0,88.0 C155.0,84.3 160.0,82.0 165.0,82.0 C170.0,82.0 175.0,84.0 180.0,86.0 C184.0,87.6 188.0,89.8 192.0,95.0 C198.7,103.7 205.3,198.0 212.0,198.0 C219.7,198.0 227.3,95.0 235.0,95.0 C241.7,95.0 248.3,95.0 255.0,95.0 C260.0,95.0 265.0,94.2 270.0,93.0 C276.7,91.5 283.3,76.0 290.0,76.0 C295.0,76.0 300.0,85.4 305.0,90.0 C311.7,96.1 318.3,108.0 325.0,108.0 C331.7,108.0 338.3,90.0 345.0,90.0 C349.0,90.0 353.0,92.4 357.0,96.0 C364.0,102.3 371.0,198.0 378.0,198.0 C387.0,198.0 396.0,115.2 405.0,100.0 C411.7,88.7 418.3,78.0 425.0,78.0 C430.0,78.0 435.0,85.7 440.0,95.0 C446.7,107.4 453.3,198.0 460.0,198.0 C528.3,198.0 596.7,198.0 665.0,198.0 C670.7,198.0 676.3,132.7 682.0,100.0" fill="none" stroke="#3f9696" stroke-width="15" stroke-linejoin="round" stroke-linecap="butt"/></svg>
<div class="t" class="num" style="right:759.75px;top:689.09px;font-size:20.8px;line-height:20.8px;color:#161616;letter-spacing:2.25px;">937.9</div>
<div class="t" class="num" style="right:534.25px;top:689.09px;font-size:20.8px;line-height:20.8px;color:#161616;letter-spacing:2.25px;">804.55</div>
<div class="t" class="num" style="right:309.15px;top:689.09px;font-size:20.8px;line-height:20.8px;color:#161616;letter-spacing:2.25px;">295.5</div>
<div class="t" class="med" style="left:1929.70px;top:688.91px;font-size:22.2px;line-height:22.2px;color:#3f9696;">View trends</div>
<div class="r" style="left:583px;top:856px;width:1327px;height:1px;background:#e6e6e6;border-radius:0;"></div>
<div class="r" style="left:1911px;top:856px;width:156px;height:1px;background:#e6e6e6;border-radius:0;"></div>
<svg class="r" style="left:617px;top:780px;" width="23" height="19" viewBox="0 0 23 19"><defs><linearGradient id="cg2" x1="0" y1="0" x2="1" y2="0"><stop offset="0" stop-color="#c9d3ea"/><stop offset="0.5" stop-color="#c9d3ea"/><stop offset="0.5" stop-color="#a9b8d8"/><stop offset="1" stop-color="#a9b8d8"/></linearGradient></defs><path d="M3.7 9 L8.3 9.6 L11.4 5 L14.9 9.6 L19.2 9 L17.8 16.9 H5.2 Z" fill="url(#cg2)" stroke="url(#cg2)" stroke-width="0.8" stroke-linejoin="round"/><path d="M2.4 5.75 Q2.4 7.35 4.0 7.35 Q2.4 7.35 2.4 8.95 Q2.4 7.35 0.7999999999999998 7.35 Q2.4 7.35 2.4 5.75 Z" fill="#c9d3ea"/><path d="M11.4 0.44999999999999996 Q11.4 2.15 13.1 2.15 Q11.4 2.15 11.4 3.8499999999999996 Q11.4 2.15 9.700000000000001 2.15 Q11.4 2.15 11.4 0.44999999999999996 Z" fill="#c9d3ea"/><path d="M20.5 5.75 Q20.5 7.35 22.1 7.35 Q20.5 7.35 20.5 8.95 Q20.5 7.35 18.9 7.35 Q20.5 7.35 20.5 5.75 Z" fill="#a9b8d8"/><text x="11.6" y="14.6" font-size="6.5" font-weight="700" text-anchor="middle" fill="#3a4a80" font-family="Liberation Sans">2</text></svg>
<div class="t" style="left:622.30px;top:805.74px;font-size:19.8px;line-height:19.8px;color:#9cc2ec;font-weight:700;-webkit-text-stroke:0.3px currentColor;">2</div>
<div class="t" style="left:692.00px;top:785.68px;font-size:22px;line-height:22px;color:#161616;">boo basket for besties</div>
<svg class="r" style="left:1057.2px;top:777.5px;overflow:visible;" width="114.7" height="28.7" viewBox="90 60 600 150"><defs><linearGradient id="sg1" x1="0" y1="0" x2="0" y2="1"><stop offset="0" stop-color="#3f9696" stop-opacity="0.12"/><stop offset="1" stop-color="#3f9696" stop-opacity="0"/></linearGradient></defs><path d="M90.0,198.0 C252.7,198.0 415.3,198.0 578.0,198.0 C585.3,198.0 592.7,89.6 600.0,85.0 C605.0,81.9 610.0,80.0 615.0,80.0 C621.7,80.0 628.3,86.7 635.0,88.0 C640.0,89.0 645.0,90.0 650.0,90.0 C655.0,90.0 660.0,82.8 665.0,82.0 C671.7,80.9 678.3,80.7 685.0,80.0 L685,198 L90,198 Z" fill="url(#sg1)"/><path d="M90.0,198.0 C252.7,198.0 415.3,198.0 578.0,198.0 C585.3,198.0 592.7,89.6 600.0,85.0 C605.0,81.9 610.0,80.0 615.0,80.0 C621.7,80.0 628.3,86.7 635.0,88.0 C640.0,89.0 645.0,90.0 650.0,90.0 C655.0,90.0 660.0,82.8 665.0,82.0 C671.7,80.9 678.3,80.7 685.0,80.0" fill="none" stroke="#3f9696" stroke-width="15" stroke-linejoin="round" stroke-linecap="butt"/></svg>
<div class="t" class="num" style="right:759.75px;top:785.09px;font-size:20.8px;line-height:20.8px;color:#161616;letter-spacing:2.25px;">917.73</div>
<div class="t" class="num" style="right:534.25px;top:785.09px;font-size:20.8px;line-height:20.8px;color:#161616;letter-spacing:2.25px;">862.03</div>
<div class="t" class="num" style="right:309.15px;top:785.09px;font-size:20.8px;line-height:20.8px;color:#161616;letter-spacing:2.25px;">144.96</div>
<div class="t" class="med" style="left:1929.70px;top:784.91px;font-size:22.2px;line-height:22.2px;color:#3f9696;">View trends</div>
<div class="r" style="left:583px;top:952px;width:1327px;height:1px;background:#e6e6e6;border-radius:0;"></div>
<div class="r" style="left:1911px;top:952px;width:156px;height:1px;background:#e6e6e6;border-radius:0;"></div>
<svg class="r" style="left:617px;top:876px;" width="23" height="19" viewBox="0 0 23 19"><defs><linearGradient id="cg3" x1="0" y1="0" x2="1" y2="0"><stop offset="0" stop-color="#f3d8bd"/><stop offset="0.5" stop-color="#f3d8bd"/><stop offset="0.5" stop-color="#e2bb95"/><stop offset="1" stop-color="#e2bb95"/></linearGradient></defs><path d="M3.7 9 L8.3 9.6 L11.4 5 L14.9 9.6 L19.2 9 L17.8 16.9 H5.2 Z" fill="url(#cg3)" stroke="url(#cg3)" stroke-width="0.8" stroke-linejoin="round"/><path d="M2.4 5.75 Q2.4 7.35 4.0 7.35 Q2.4 7.35 2.4 8.95 Q2.4 7.35 0.7999999999999998 7.35 Q2.4 7.35 2.4 5.75 Z" fill="#f3d8bd"/><path d="M11.4 0.44999999999999996 Q11.4 2.15 13.1 2.15 Q11.4 2.15 11.4 3.8499999999999996 Q11.4 2.15 9.700000000000001 2.15 Q11.4 2.15 11.4 0.44999999999999996 Z" fill="#f3d8bd"/><path d="M20.5 5.75 Q20.5 7.35 22.1 7.35 Q20.5 7.35 20.5 8.95 Q20.5 7.35 18.9 7.35 Q20.5 7.35 20.5 5.75 Z" fill="#e2bb95"/><text x="11.6" y="14.6" font-size="6.5" font-weight="700" text-anchor="middle" fill="#7a5030" font-family="Liberation Sans">3</text></svg>
<div class="t" style="left:622.30px;top:901.74px;font-size:19.8px;line-height:19.8px;color:#dba673;font-weight:700;-webkit-text-stroke:0.3px currentColor;">3</div>
<div class="t" style="left:692.00px;top:881.76px;font-size:21.9px;line-height:21.9px;color:#161616;">spooky basket for gf</div>
<svg class="r" style="left:1057.2px;top:873.5px;overflow:visible;" width="114.7" height="28.7" viewBox="90 60 600 150"><defs><linearGradient id="sg2" x1="0" y1="0" x2="0" y2="1"><stop offset="0" stop-color="#3f9696" stop-opacity="0.12"/><stop offset="1" stop-color="#3f9696" stop-opacity="0"/></linearGradient></defs><path d="M90.0,198.0 C275.0,198.0 460.0,198.0 645.0,198.0 C651.7,198.0 658.3,73.0 665.0,73.0 C671.7,73.0 678.3,73.0 685.0,73.0 L685,198 L90,198 Z" fill="url(#sg2)"/><path d="M90.0,198.0 C275.0,198.0 460.0,198.0 645.0,198.0 C651.7,198.0 658.3,73.0 665.0,73.0 C671.7,73.0 678.3,73.0 685.0,73.0" fill="none" stroke="#3f9696" stroke-width="15" stroke-linejoin="round" stroke-linecap="butt"/></svg>
<div class="t" class="num" style="right:759.75px;top:881.09px;font-size:20.8px;line-height:20.8px;color:#161616;letter-spacing:2.25px;">785.9</div>
<div class="t" class="num" style="right:534.25px;top:881.09px;font-size:20.8px;line-height:20.8px;color:#161616;letter-spacing:2.25px;">711.41</div>
<div class="t" class="num" style="right:309.15px;top:881.09px;font-size:20.8px;line-height:20.8px;color:#161616;letter-spacing:2.25px;">37.88</div>
<div class="t" class="med" style="left:1929.70px;top:880.91px;font-size:22.2px;line-height:22.2px;color:#3f9696;">View trends</div>
<div class="t" style="left:622.50px;top:976.99px;font-size:19.5px;line-height:19.5px;color:#bdbdbd;font-weight:700;">4</div>
<div class="t" style="left:692.00px;top:978.06px;font-size:21.55px;line-height:21.55px;color:#161616;">wall decor</div>
<svg class="r" style="left:1057.2px;top:969.5px;overflow:visible;" width="114.7" height="28.7" viewBox="90 60 600 150"><defs><linearGradient id="sg3" x1="0" y1="0" x2="0" y2="1"><stop offset="0" stop-color="#3f9696" stop-opacity="0.12"/><stop offset="1" stop-color="#3f9696" stop-opacity="0"/></linearGradient></defs><path d="M90.0,97.0 C103.3,96.3 116.7,96.1 130.0,95.0 C141.7,94.1 153.3,88.0 165.0,88.0 C175.0,88.0 185.0,95.5 195.0,97.0 C205.0,98.5 215.0,100.0 225.0,100.0 C231.7,100.0 238.3,98.0 245.0,98.0 C253.3,98.0 261.7,198.0 270.0,198.0 C278.3,198.0 286.7,92.0 295.0,92.0 C303.3,92.0 311.7,95.6 320.0,97.0 C333.3,99.3 346.7,100.7 360.0,103.0 C371.7,105.0 383.3,110.0 395.0,110.0 C406.7,110.0 418.3,97.0 430.0,97.0 C440.0,97.0 450.0,103.0 460.0,103.0 C470.0,103.0 480.0,98.2 490.0,95.0 C498.3,92.3 506.7,85.0 515.0,85.0 C521.7,85.0 528.3,97.0 535.0,97.0 C540.0,97.0 545.0,92.0 550.0,92.0 C560.0,92.0 570.0,198.0 580.0,198.0 C586.7,198.0 593.3,95.0 600.0,95.0 C608.3,95.0 616.7,97.0 625.0,97.0 C630.0,97.0 635.0,97.0 640.0,97.0 C648.3,97.0 656.7,198.0 665.0,198.0 C671.7,198.0 678.3,132.7 685.0,100.0 L685,198 L90,198 Z" fill="url(#sg3)"/><path d="M90.0,97.0 C103.3,96.3 116.7,96.1 130.0,95.0 C141.7,94.1 153.3,88.0 165.0,88.0 C175.0,88.0 185.0,95.5 195.0,97.0 C205.0,98.5 215.0,100.0 225.0,100.0 C231.7,100.0 238.3,98.0 245.0,98.0 C253.3,98.0 261.7,198.0 270.0,198.0 C278.3,198.0 286.7,92.0 295.0,92.0 C303.3,92.0 311.7,95.6 320.0,97.0 C333.3,99.3 346.7,100.7 360.0,103.0 C371.7,105.0 383.3,110.0 395.0,110.0 C406.7,110.0 418.3,97.0 430.0,97.0 C440.0,97.0 450.0,103.0 460.0,103.0 C470.0,103.0 480.0,98.2 490.0,95.0 C498.3,92.3 506.7,85.0 515.0,85.0 C521.7,85.0 528.3,97.0 535.0,97.0 C540.0,97.0 545.0,92.0 550.0,92.0 C560.0,92.0 570.0,198.0 580.0,198.0 C586.7,198.0 593.3,95.0 600.0,95.0 C608.3,95.0 616.7,97.0 625.0,97.0 C630.0,97.0 635.0,97.0 640.0,97.0 C648.3,97.0 656.7,198.0 665.0,198.0 C671.7,198.0 678.3,132.7 685.0,100.0" fill="none" stroke="#3f9696" stroke-width="15" stroke-linejoin="round" stroke-linecap="butt"/></svg>
<div class="t" class="num" style="right:759.75px;top:977.09px;font-size:20.8px;line-height:20.8px;color:#161616;letter-spacing:2.25px;">762.33</div>
<div class="t" class="num" style="right:534.25px;top:977.09px;font-size:20.8px;line-height:20.8px;color:#161616;letter-spacing:2.25px;">655.32</div>
<div class="t" class="num" style="right:309.15px;top:977.09px;font-size:20.8px;line-height:20.8px;color:#161616;letter-spacing:2.25px;">272.96</div>
<div class="t" class="med" style="left:1929.70px;top:976.91px;font-size:22.2px;line-height:22.2px;color:#3f9696;">View trends</div>
</body></html>
